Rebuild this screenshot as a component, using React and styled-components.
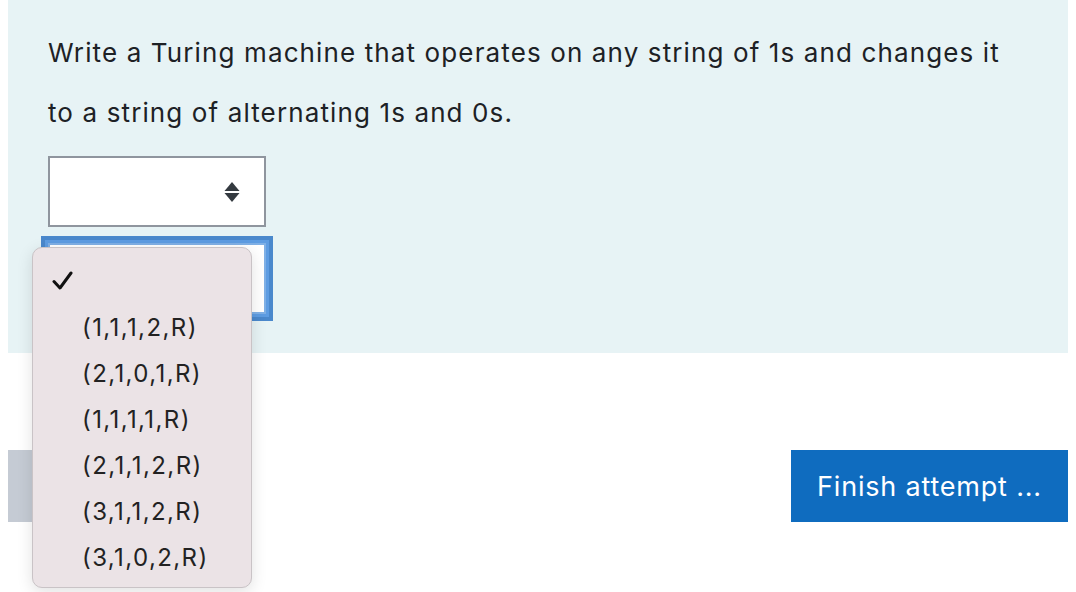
import styled, { createGlobalStyle } from "styled-components";

const GlobalStyle = createGlobalStyle`
  html, body {
    margin: 0;
    padding: 0;
    background: #ffffff;
  }
  body {
    font-family: Inter, "Noto Sans", "Liberation Sans", sans-serif;
    color: #1d2125;
  }
`;

const options = [
  "(1,1,1,2,R)",
  "(2,1,0,1,R)",
  "(1,1,1,1,R)",
  "(2,1,1,2,R)",
  "(3,1,1,2,R)",
  "(3,1,0,2,R)",
];

const App = () => {
  return (
    <>
      <GlobalStyle />
      <Page>
        <QuestionPanel>
          <QuestionText>
            Write a Turing machine that operates on any string of 1s and changes it
            <br />
            to a string of alternating 1s and 0s.
          </QuestionText>
          <SelectBox>
            <UpDownIcon width="16" height="20" viewBox="0 0 16 20">
              <path d="M8 0 L15.5 9 L0.5 9 Z" fill="#343a40" />
              <path d="M0.5 11 L15.5 11 L8 20 Z" fill="#343a40" />
            </UpDownIcon>
          </SelectBox>
          <SelectBox focused />
        </QuestionPanel>
        <ButtonRow>
          <GreyButton aria-label="Previous page" />
          <PrimaryButton>Finish attempt ...</PrimaryButton>
        </ButtonRow>
        <OptionMenu>
          <OptionItem>
            <CheckIcon width="22" height="20" viewBox="0 0 22 20">
              <path
                d="M2 10.5 L8 17 L19 2"
                fill="none"
                stroke="#111"
                strokeWidth="3"
                strokeLinecap="round"
                strokeLinejoin="round"
              />
            </CheckIcon>
          </OptionItem>
          {options.map((o) => (
            <OptionItem key={o}>
              <OptionLabel>{o}</OptionLabel>
            </OptionItem>
          ))}
        </OptionMenu>
      </Page>
    </>
  );
};

const Page = styled.div`
  position: relative;
  width: 1076px;
  height: 592px;
  padding: 0 8px;
  box-sizing: border-box;
  overflow: hidden;
`;

const QuestionPanel = styled.div`
  background-color: #e7f3f5;
  padding: 23px 40px 39px 40px;
  display: flex;
  flex-direction: column;
  align-items: flex-start;
`;

const QuestionText = styled.p`
  margin: 0 0 13px 0;
  font-size: 26px;
  line-height: 60px;
  letter-spacing: 1.12px;
  color: #1d2125;
  white-space: nowrap;
`;

const SelectBox = styled.div`
  width: 218px;
  height: 71px;
  box-sizing: border-box;
  background: #ffffff;
  border: 2px solid ${(p) => (p.focused ? "#7fb0e6" : "#8f959e")};
  box-shadow: ${(p) =>
    p.focused ? "0 0 0 3px #5d9ce2, 0 0 0 7px #4a88cc" : "none"};
  display: flex;
  align-items: center;
  justify-content: flex-end;
  padding-right: 24px;
  margin-top: ${(p) => (p.focused ? "16px" : "0")};
`;

const UpDownIcon = styled.svg`
  display: block;
`;

const ButtonRow = styled.div`
  margin-top: 97px;
  display: flex;
  justify-content: space-between;
  align-items: center;
`;

const GreyButton = styled.button`
  width: 200px;
  height: 72px;
  border: none;
  background: #c5cbd4;
`;

const PrimaryButton = styled.button`
  width: 277px;
  height: 72px;
  border: none;
  background: #0f6cbf;
  color: #ffffff;
  font-family: Inter, "Noto Sans", sans-serif;
  font-size: 27px;
  letter-spacing: 0.8px;
  padding: 0;
`;

const OptionMenu = styled.div`
  position: absolute;
  left: 32px;
  top: 247px;
  width: 220px;
  height: 341px;
  box-sizing: border-box;
  background: #ebe3e6;
  border: 1px solid #c9c3c6;
  border-radius: 10px;
  box-shadow: 0 4px 16px rgba(0, 0, 0, 0.12);
  padding-top: 10px;
  display: flex;
  flex-direction: column;
`;

const OptionItem = styled.div`
  height: 46px;
  display: flex;
  align-items: center;
  padding-left: 19px;
`;

const CheckIcon = styled.svg`
  display: block;
`;

const OptionLabel = styled.span`
  padding-left: 30px;
  font-size: 24px;
  letter-spacing: 1.4px;
  color: #222222;
`;

export default App;
